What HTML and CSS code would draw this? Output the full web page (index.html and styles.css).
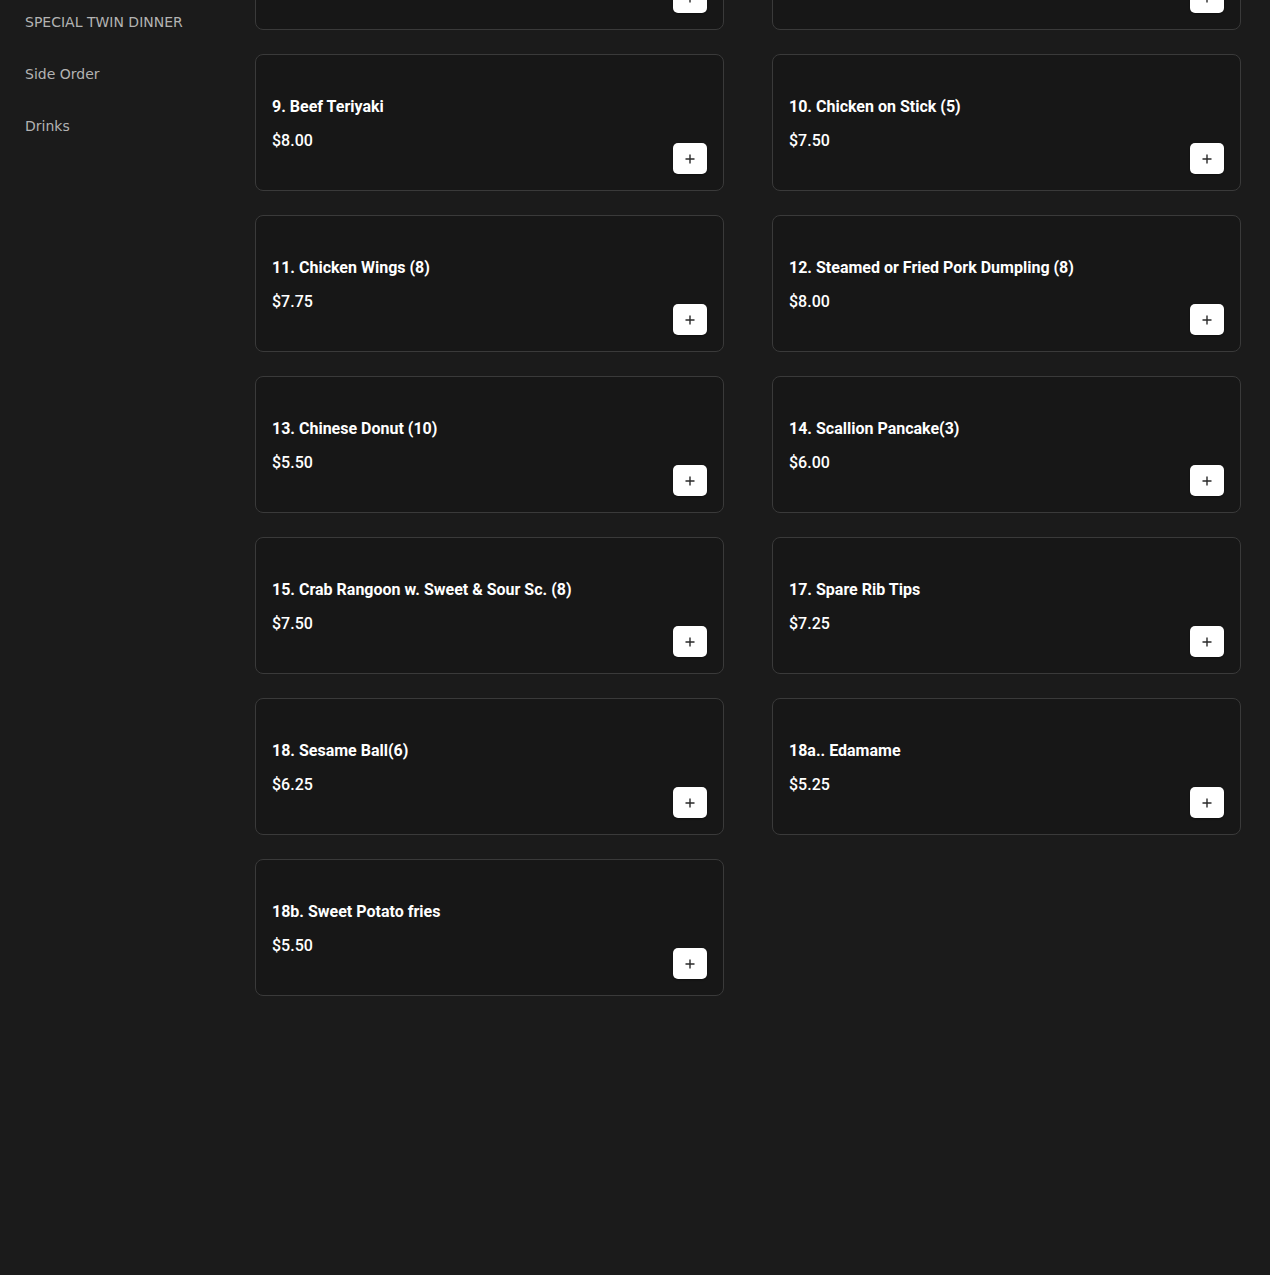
FILE: index.html
```html
<!DOCTYPE html>
<html lang="en">
<head>
    <meta charset="UTF-8">
    <meta name="viewport" content="width=device-width, initial-scale=1.0">
    <title>Menu</title>
    <link rel="stylesheet" href="styles.css">
</head>
<body>
    <div class="page">
        <!-- Category list -->
        <div class="sidebar">
            <a href="#special">SPECIAL TWIN DINNER</a>
            <a href="#side">Side Order</a>
            <a href="#drinks">Drinks</a>
        </div>

        <!-- Items -->
        <div class="menu">
            <div class="card">
                <div class="info">
                    <h3>7. Egg Roll (2)</h3>
                    <p>$4.50</p>
                </div>
                <button class="add" aria-label="Add"><svg viewBox="0 0 10 10"><path d="M5 0.5v9M0.5 5h9"/></svg></button>
            </div>
            <div class="card">
                <div class="info">
                    <h3>8. Chicken Fingers</h3>
                    <p>$7.50</p>
                </div>
                <button class="add" aria-label="Add"><svg viewBox="0 0 10 10"><path d="M5 0.5v9M0.5 5h9"/></svg></button>
            </div>
            <div class="card">
                <div class="info">
                    <h3>9. Beef Teriyaki</h3>
                    <p>$8.00</p>
                </div>
                <button class="add" aria-label="Add"><svg viewBox="0 0 10 10"><path d="M5 0.5v9M0.5 5h9"/></svg></button>
            </div>
            <div class="card">
                <div class="info">
                    <h3>10. Chicken on Stick (5)</h3>
                    <p>$7.50</p>
                </div>
                <button class="add" aria-label="Add"><svg viewBox="0 0 10 10"><path d="M5 0.5v9M0.5 5h9"/></svg></button>
            </div>
            <div class="card">
                <div class="info">
                    <h3>11. Chicken Wings (8)</h3>
                    <p>$7.75</p>
                </div>
                <button class="add" aria-label="Add"><svg viewBox="0 0 10 10"><path d="M5 0.5v9M0.5 5h9"/></svg></button>
            </div>
            <div class="card">
                <div class="info">
                    <h3>12. Steamed or Fried Pork Dumpling (8)</h3>
                    <p>$8.00</p>
                </div>
                <button class="add" aria-label="Add"><svg viewBox="0 0 10 10"><path d="M5 0.5v9M0.5 5h9"/></svg></button>
            </div>
            <div class="card">
                <div class="info">
                    <h3>13. Chinese Donut (10)</h3>
                    <p>$5.50</p>
                </div>
                <button class="add" aria-label="Add"><svg viewBox="0 0 10 10"><path d="M5 0.5v9M0.5 5h9"/></svg></button>
            </div>
            <div class="card">
                <div class="info">
                    <h3>14. Scallion Pancake(3)</h3>
                    <p>$6.00</p>
                </div>
                <button class="add" aria-label="Add"><svg viewBox="0 0 10 10"><path d="M5 0.5v9M0.5 5h9"/></svg></button>
            </div>
            <div class="card">
                <div class="info">
                    <h3>15. Crab Rangoon w. Sweet &amp; Sour Sc. (8)</h3>
                    <p>$7.50</p>
                </div>
                <button class="add" aria-label="Add"><svg viewBox="0 0 10 10"><path d="M5 0.5v9M0.5 5h9"/></svg></button>
            </div>
            <div class="card">
                <div class="info">
                    <h3>17. Spare Rib Tips</h3>
                    <p>$7.25</p>
                </div>
                <button class="add" aria-label="Add"><svg viewBox="0 0 10 10"><path d="M5 0.5v9M0.5 5h9"/></svg></button>
            </div>
            <div class="card">
                <div class="info">
                    <h3>18. Sesame Ball(6)</h3>
                    <p>$6.25</p>
                </div>
                <button class="add" aria-label="Add"><svg viewBox="0 0 10 10"><path d="M5 0.5v9M0.5 5h9"/></svg></button>
            </div>
            <div class="card">
                <div class="info">
                    <h3>18a.. Edamame</h3>
                    <p>$5.25</p>
                </div>
                <button class="add" aria-label="Add"><svg viewBox="0 0 10 10"><path d="M5 0.5v9M0.5 5h9"/></svg></button>
            </div>
            <div class="card">
                <div class="info">
                    <h3>18b. Sweet Potato fries</h3>
                    <p>$5.50</p>
                </div>
                <button class="add" aria-label="Add"><svg viewBox="0 0 10 10"><path d="M5 0.5v9M0.5 5h9"/></svg></button>
            </div>
        </div>
    </div>
</body>
</html>
```

FILE: styles.css
```css
body {
    background-color: #1b1b1b;
    color: #ffffff;
    font-family: Roboto, "Liberation Sans", sans-serif;
    margin: 0;
    padding: 0;
    height: 1275px;
    overflow: hidden;
}

/* page is shown scrolled down a bit */
.page {
    display: flex;
    margin-top: -107px;
}

.sidebar {
    width: 255px;
    flex-shrink: 0;
    padding-top: 103px;
    display: flex;
    flex-direction: column;
}

.sidebar a {
    display: block;
    padding: 16px 25px;
    line-height: 20px;
    font-family: "DejaVu Sans", sans-serif;
    font-size: 14px;
    color: #b3b3b3;
    text-decoration: none;
}

.menu {
    flex: 1;
    margin-right: 29px;
    display: grid;
    grid-template-columns: repeat(2, 1fr);
    column-gap: 48px;
    row-gap: 24px;
    align-content: start;
}

.card {
    height: 137px;
    box-sizing: border-box;
    padding: 16px;
    background-color: #171717;
    border: 1px solid #3a3a3a;
    border-radius: 8px;
    display: flex;
    justify-content: space-between;
}

.card .info {
    padding-top: 24px;
}

.card h3 {
    margin: 0;
    font-size: 16px;
    line-height: 24px;
    font-weight: 700;
}

.card p {
    margin: 10px 0 0;
    font-size: 16px;
    line-height: 24px;
    font-weight: 500;
}

.add {
    align-self: flex-end;
    width: 34px;
    height: 31px;
    padding: 0;
    border: none;
    border-radius: 5px;
    background-color: #ffffff;
    box-shadow: 0 1px 2px rgba(0, 0, 0, 0.4);
    display: flex;
    align-items: center;
    justify-content: center;
    cursor: pointer;
}

.add svg {
    width: 10px;
    height: 10px;
    stroke: #2a2a2a;
    stroke-width: 1.4;
    fill: none;
}
```
